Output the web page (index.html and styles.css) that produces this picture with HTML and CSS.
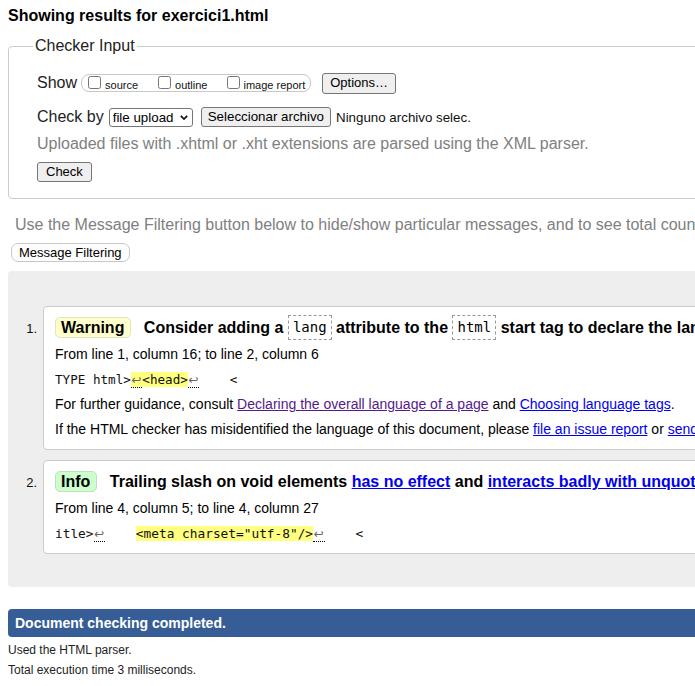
FILE: index.html
```html
<!DOCTYPE html>
<html lang="en">
<head>
<meta charset="utf-8">
<title>Showing results for exercici1.html - Nu Html Checker</title>
<link rel="stylesheet" href="styles.css">
</head>
<body>
<h2 class="page-title">Showing results for exercici1.html</h2>

<fieldset class="checker-input">
  <legend>Checker Input</legend>
  <div class="form-row">
    <span class="row-label">Show</span>
    <span class="show-group">
      <label class="opt"><input type="checkbox"><span>source</span></label>
      <label class="opt"><input type="checkbox"><span>outline</span></label>
      <label class="opt opt-last"><input type="checkbox"><span>image report</span></label>
    </span>
    <button class="btn btn-options" type="button">Options…</button>
  </div>
  <div class="form-row form-row-checkby">
    <span class="row-label">Check by</span>
    <span class="select-wrap">
      <select class="select"><option>file upload</option></select>
      <svg class="chev" width="8" height="5" viewBox="0 0 8 5" aria-hidden="true"><path d="M0.8 0.8 L4 4 L7.2 0.8" fill="none" stroke="#111" stroke-width="1.7"/></svg>
    </span>
    <button class="btn btn-file" type="button">Seleccionar archivo</button>
    <span class="file-none">Ninguno archivo selec.</span>
  </div>
  <p class="instructions">Uploaded files with .xhtml or .xht extensions are parsed using the XML parser.</p>
  <button class="btn btn-check" type="submit">Check</button>
</fieldset>

<p class="filter-note">Use the Message Filtering button below to hide/show particular messages, and to see total counts of errors and warnings.</p>
<button class="filter-btn" type="button">Message Filtering</button>

<div class="results">
  <ol class="messages">
    <li class="message">
      <span class="num">1.</span>
      <div class="msg-box">
        <p class="msg-title"><span class="badge badge-warning">Warning</span> Consider adding a <code class="attr">lang</code> attribute to the <code class="attr">html</code> start tag to declare the language of this document.</p>
        <p class="msg-row">From line 1, column 16; to line 2, column 6</p>
        <p class="msg-row extract">TYPE html&gt;<mark><span class="lf">↩</span>&lt;head&gt;</mark><span class="lf">↩</span>    &lt;</p>
        <p class="msg-row">For further guidance, consult <a class="visited" href="#">Declaring the overall language of a page</a> and <a href="#">Choosing language tags</a>.</p>
        <p class="msg-row">If the HTML checker has misidentified the language of this document, please <a href="#">file an issue report</a> or <a href="#">send e-mail</a> to report the problem.</p>
      </div>
    </li>
    <li class="message">
      <span class="num">2.</span>
      <div class="msg-box">
        <p class="msg-title"><span class="badge badge-info">Info</span> Trailing slash on void elements <a href="#">has no effect</a> and <a href="#">interacts badly with unquoted attribute values</a>.</p>
        <p class="msg-row">From line 4, column 5; to line 4, column 27</p>
        <p class="msg-row extract extract-wide">itle&gt;<span class="lf">↩</span>    <mark>&lt;meta charset="utf-8"/&gt;</mark><span class="lf">↩</span>    &lt;</p>
      </div>
    </li>
  </ol>
</div>

<h2 class="completed">Document checking completed.</h2>
<p class="stats">Used the HTML parser.</p>
<p class="stats">Total execution time 3 milliseconds.</p>
</body>
</html>
```

FILE: styles.css
```css
html {
  overflow: hidden;
}

body {
  margin: 0;
  width: 1200px;
  font-family: "Liberation Sans", Arial, sans-serif;
  color: #000;
  background: #fff;
}

.page-title {
  margin: 7px 8px 0;
  font-size: 16px;
  line-height: 18px;
  font-weight: bold;
}

/* Checker input fieldset */
.checker-input {
  margin: 12px 8px 0;
  padding: 17px 20px 16px 28px;
  border: 1px solid #ccc;
  border-radius: 4px;
  min-width: 0;
}

.checker-input legend {
  font-size: 16px;
  line-height: 18px;
  padding: 0 2px;
  margin-left: -4px;
  color: #222;
}

.form-row {
  display: flex;
  align-items: center;
  height: 22px;
  white-space: nowrap;
}

.form-row-checkby {
  margin-top: 12px;
}

.row-label {
  font-size: 16px;
  color: #222;
  margin-right: 4px;
}

.show-group {
  display: inline-flex;
  align-items: center;
  gap: 20px;
  height: 16px;
  padding: 0 5px 0 6px;
  border: 1px solid #c8c8c8;
  border-radius: 8px;
  background: #fff;
}

.opt {
  display: inline-flex;
  align-items: center;
  font-size: 11px;
  color: #111;
}

.opt input {
  width: 13px;
  height: 13px;
  margin: 0 4px 2px 0;
}

.opt-last input {
  margin-right: 3px;
}

.opt span {
  padding-top: 3px;
}

.btn {
  font-family: "Liberation Sans", Arial, sans-serif;
  font-size: 13px;
  color: #000;
  background: #efefef;
  border: 1px solid #767676;
  border-radius: 3px;
  padding: 0 7px;
  height: 20px;
  line-height: 18px;
}

.btn-options {
  margin-left: 11px;
  height: 21px;
}

.select-wrap {
  display: inline-flex;
  align-items: center;
  height: 19px;
  margin-left: 1px;
  padding: 0 4px 0 3px;
  border: 1px solid #767676;
  border-radius: 3px;
  background: #fff;
  box-sizing: border-box;
}

.select {
  appearance: none;
  -webkit-appearance: none;
  border: 0;
  padding: 0;
  margin: 0 6px 0 0;
  background: transparent;
  font-family: "Liberation Sans", Arial, sans-serif;
  font-size: 13.33px;
  color: #000;
}

.chev {
  display: block;
}

.btn-file {
  margin-left: 8px;
  font-size: 13.33px;
  padding: 0 6px;
}

.file-none {
  margin-left: 5px;
  font-size: 13.33px;
  color: #111;
}

.instructions {
  margin: 7px 0 0;
  font-size: 16px;
  line-height: 18px;
  color: #808080;
  white-space: nowrap;
}

.btn-check {
  display: block;
  margin-top: 9px;
  padding: 0 8px;
}

/* Filtering */
.filter-note {
  margin: 17px 0 0 15px;
  font-size: 16px;
  line-height: 18px;
  color: #808080;
  white-space: nowrap;
}

.filter-btn {
  display: block;
  margin: 9px 0 0 11px;
  height: 19px;
  padding: 0 7px;
  font-family: "Liberation Sans", Arial, sans-serif;
  font-size: 13px;
  color: #000;
  background: #fdfdfd;
  border: 1px solid #c8c8c8;
  border-radius: 7px;
}

/* Results */
.results {
  margin: 9px 8px 0;
  padding: 35px 0 33px;
  background: #eee;
  border-radius: 4px;
}

.messages {
  margin: 0;
  padding: 0;
  list-style: none;
}

.message {
  display: flex;
  align-items: flex-start;
}

.message + .message {
  margin-top: 10px;
}

.num {
  flex: 0 0 35px;
  box-sizing: border-box;
  padding-right: 6px;
  margin-top: 9px;
  text-align: right;
  font-size: 13px;
  line-height: 28px;
  color: #111;
}

.msg-box {
  flex: 1;
  background: #fff;
  border: 1px solid #ccc;
  border-radius: 4px;
  padding: 7px 11px;
}

.msg-title {
  margin: 0;
  font-size: 16px;
  line-height: 28px;
  font-weight: bold;
  white-space: nowrap;
}

.badge {
  display: inline-block;
  vertical-align: middle;
  line-height: 19px;
  padding: 0 6px 0 5px;
  margin-right: 8px;
  border: 1px solid #ddd;
  border-radius: 5px;
  position: relative;
  top: -1px;
}

.badge-warning {
  background: #ffffcc;
  border-color: #e2e2c4;
}

.badge-info {
  background: #ccffcc;
  border-color: #c4dcc4;
}

.attr {
  display: inline-block;
  vertical-align: middle;
  position: relative;
  top: -1px;
  font-family: "DejaVu Sans Mono", monospace;
  font-size: 14px;
  font-weight: normal;
  line-height: 23px;
  padding: 0 4px;
  border: 1px dashed #999;
}

.msg-row {
  margin: 0;
  font-size: 14px;
  line-height: 25px;
  white-space: nowrap;
  color: #000;
}

.extract {
  font-family: "DejaVu Sans Mono", monospace;
  font-size: 12.6px;
  white-space: pre;
  color: #111;
}

.extract-wide {
  font-size: 12.8px;
}

.extract mark {
  background: #ffff80;
  color: inherit;
}

.lf {
  display: inline-block;
  width: 11.5px;
  line-height: 13px;
  text-align: center;
  font-family: "DejaVu Sans", sans-serif;
  font-size: 12px;
  color: #666;
  border-bottom: 1px dotted #000;
}

a {
  color: #0000ee;
  text-decoration: underline;
}

a.visited {
  color: #551a8b;
}

/* Completed */
.completed {
  margin: 22px 8px 0;
  height: 28px;
  padding: 0 7px;
  line-height: 28px;
  font-size: 14px;
  font-weight: bold;
  color: #fff;
  background: #365d95;
  border-radius: 4px;
}

.stats {
  margin: 0 8px;
  font-size: 12px;
  line-height: 20px;
  color: #222;
}

.completed + .stats {
  margin-top: 3px;
}
```
